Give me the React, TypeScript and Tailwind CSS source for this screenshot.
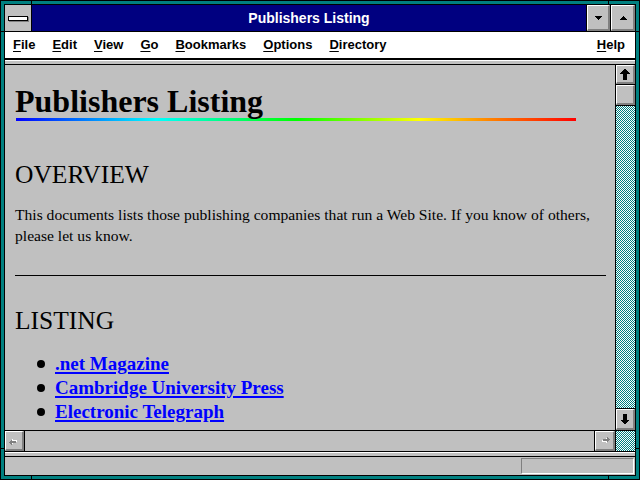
import React from "react";

const sans = "font-['Liberation_Sans',Arial,sans-serif]";
const serif = "font-['Liberation_Serif','Times_New_Roman',serif]";

function Checker({ className = "" }: { className?: string }) {
  return (
    <svg className={className} width="100%" height="100%" shapeRendering="crispEdges">
      <defs>
        <pattern id="chk" width="2" height="2" patternUnits="userSpaceOnUse">
          <rect width="2" height="2" fill="#ffffff" />
          <rect width="1" height="1" fill="#008080" />
          <rect x="1" y="1" width="1" height="1" fill="#008080" />
        </pattern>
      </defs>
      <rect width="100%" height="100%" fill="url(#chk)" />
    </svg>
  );
}

function Btn({ children, className = "" }: { children?: React.ReactNode; className?: string }) {
  return (
    <div
      className={`flex items-center justify-center border-t border-l border-t-white border-l-white border-r-2 border-b-2 border-r-[#808080] border-b-[#808080] bg-[#c0c0c0] ${className}`}
    >
      {children}
    </div>
  );
}

function Arrow({ dir, disabled }: { dir: "up" | "down" | "left" | "right"; disabled?: boolean }) {
  const rot = { up: 0, down: 180, left: 270, right: 90 }[dir];
  const pts = "4.5,0 9,4.5 6,4.5 6,10 3,10 3,4.5 0,4.5";
  if (disabled) {
    return (
      <svg width="10" height="10" viewBox="0 0 10 11" style={{ transform: `rotate(${rot}deg)` }} shapeRendering="crispEdges">
        <polygon points={pts} fill="#ffffff" transform="translate(1,1) scale(0.8)" />
        <polygon points={pts} fill="#808080" transform="scale(0.8)" />
      </svg>
    );
  }
  return (
    <svg width="10" height="11" viewBox="0 0 9 10" style={{ transform: `rotate(${rot}deg)` }} shapeRendering="crispEdges">
      <polygon points={pts} fill="#000000" />
    </svg>
  );
}

function MenuItem({ label }: { label: string }) {
  return (
    <span>
      <span className="underline underline-offset-2">{label[0]}</span>
      {label.slice(1)}
    </span>
  );
}

const links = [".net Magazine", "Cambridge University Press", "Electronic Telegraph"];

export default function App() {
  return (
    <div className="relative h-[480px] w-[640px] border border-black bg-[#008080] p-[3px]">
      {/* resize corner ticks */}
      <div className="absolute left-[30px] top-0 h-[4px] w-px bg-black" />
      <div className="absolute left-[607px] top-0 h-[4px] w-px bg-black" />
      <div className="absolute bottom-0 left-[30px] h-[4px] w-px bg-black" />
      <div className="absolute bottom-0 left-[607px] h-[4px] w-px bg-black" />
      <div className="absolute left-0 top-[30px] h-px w-[4px] bg-black" />
      <div className="absolute left-0 top-[447px] h-px w-[4px] bg-black" />
      <div className="absolute right-0 top-[30px] h-px w-[4px] bg-black" />
      <div className="absolute right-0 top-[447px] h-px w-[4px] bg-black" />

      <div className={`flex h-[472px] flex-col border border-black bg-[#c0c0c0] ${sans}`}>
        {/* title bar */}
        <div className="flex h-[27px] border-b border-black bg-[#000080]">
          <div className="flex w-[27px] items-center justify-center border-r border-black bg-[#c0c0c0]">
            <div className="h-[5px] w-[20px] border border-black bg-white shadow-[1px_1px_0_#808080]" />
          </div>
          <div className="flex flex-1 items-center justify-center text-[14px] font-bold text-white">
            Publishers Listing
          </div>
          <div className="w-[24px] border-l border-black">
            <Btn className="h-full">
              <svg width="8" height="4" viewBox="0 0 8 4" shapeRendering="crispEdges">
                <polygon points="0,0 8,0 4,4" fill="#000" />
              </svg>
            </Btn>
          </div>
          <div className="w-[25px] border-l border-black">
            <Btn className="h-full">
              <svg width="8" height="4" viewBox="0 0 8 4" shapeRendering="crispEdges">
                <polygon points="0,4 8,4 4,0" fill="#000" />
              </svg>
            </Btn>
          </div>
        </div>

        {/* menu bar */}
        <div className="flex h-[28px] items-center gap-[17px] border-b-2 border-black bg-white pl-[8px] pr-[10px] text-[13px] font-bold text-black">
          <MenuItem label="File" />
          <MenuItem label="Edit" />
          <MenuItem label="View" />
          <MenuItem label="Go" />
          <MenuItem label="Bookmarks" />
          <MenuItem label="Options" />
          <MenuItem label="Directory" />
          <span className="ml-auto">
            <MenuItem label="Help" />
          </span>
        </div>
        <div className="h-[5px] border-t border-b border-t-white border-b-black bg-[#c0c0c0]" />

        {/* main */}
        <div className="flex h-[386px]">
          <div className="flex flex-1 flex-col">
            <div className={`h-[365px] overflow-hidden bg-[#c0c0c0] pl-[10px] pr-[9px] text-black ${serif}`}>
              <h1 className="mt-[20px] text-[32px] font-bold leading-[32px]">Publishers Listing</h1>
              <div className="ml-[1px] mt-[1px] h-[3px] w-[560px] bg-[linear-gradient(to_right,#0000ff,#00ffff_25%,#00ff00_50%,#ffff00_72%,#ff8000_85%,#ff0000)]" />
              <h2 className="mt-[41px] text-[25.5px] leading-[25px]">OVERVIEW</h2>
              <p className="mt-[17px] text-[15.6px] leading-[21px]">
                This documents lists those publishing companies that run a Web Site. If you know of others,
                please let us know.
              </p>
              <div className="mt-[29px] h-px bg-black" />
              <h2 className="mt-[32px] text-[25.5px] leading-[25px]">LISTING</h2>
              <ul className="mt-[19px]">
                {links.map((l) => (
                  <li key={l} className="flex h-[24px] items-center">
                    <span className="ml-[22px] mr-[10px] h-[8px] w-[8px] rounded-full bg-black" />
                    <a className="text-[19px] font-bold leading-[24px] text-[#0000ff] underline decoration-2 underline-offset-2">
                      {l}
                    </a>
                  </li>
                ))}
              </ul>
            </div>
            {/* horizontal scrollbar */}
            <div className="flex h-[21px] border-t border-black">
              <div className="w-[20px] border-r border-black">
                <Btn className="h-full">
                  <Arrow dir="left" disabled />
                </Btn>
              </div>
              <div className="flex-1 bg-[#c0c0c0]" />
              <div className="w-[21px] border-l border-black">
                <Btn className="h-full">
                  <Arrow dir="right" disabled />
                </Btn>
              </div>
            </div>
          </div>
          {/* vertical scrollbar */}
          <div className="flex w-[20px] flex-col border-l border-black">
            <div className="h-[20px] border-b border-black">
              <Btn className="h-full">
                <Arrow dir="up" />
              </Btn>
            </div>
            <div className="h-[21px] border-b border-black">
              <Btn className="h-full" />
            </div>
            <div className="flex-1 overflow-hidden">
              <Checker />
            </div>
            <div className="h-[23px] border-y border-black">
              <Btn className="h-full">
                <Arrow dir="down" />
              </Btn>
            </div>
            <div className="h-[20px] overflow-hidden">
              <Checker />
            </div>
          </div>
        </div>

        <div className="h-[6px] border-y border-black bg-[#c0c0c0] shadow-[inset_0_1px_0_#ffffff]" />
        {/* status bar */}
        <div className="flex h-[18px] items-center justify-end bg-[#c0c0c0] pr-[1px]">
          <div className="h-[16px] w-[113px] border-t border-l border-b border-r border-t-[#808080] border-l-[#808080] border-b-white border-r-white" />
        </div>
      </div>
    </div>
  );
}
